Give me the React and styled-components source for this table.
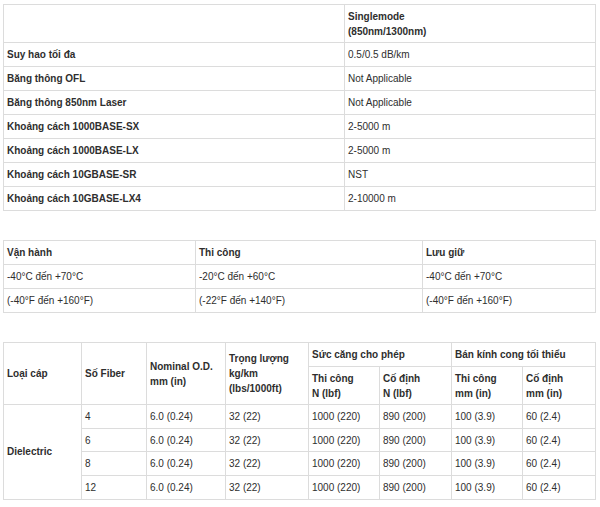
import React from "react";
import styled, { createGlobalStyle } from "styled-components";

const Global = createGlobalStyle`
  html, body { margin: 0; padding: 0; background: #fff; }
  body { font-family: "Liberation Sans", Arial, sans-serif; }
`;

const Page = styled.div`
  padding: 4px 0 0 3px;
  width: 592px;
  display: flex;
  flex-direction: column;
  gap: 29px;
`;

const Table = styled.table`
  border-collapse: collapse;
  table-layout: fixed;
  width: 592px;
  font-size: 10px;
  line-height: 15px;
  color: #2e2e2e;
  margin-top: ${(p) => p.$mt || 0}px;
`;

const Row = styled.tr`
  height: ${(p) => p.$h || 24}px;
`;

const Cell = styled.td`
  border: 1px solid #dcdcdc;
  padding: 0 3px;
  vertical-align: middle;
  font-weight: ${(p) => (p.$bold ? 700 : 400)};
  white-space: nowrap;
`;

const Col = ({ widths }) => (
  <colgroup>
    {widths.map((w, i) => (
      <col key={i} style={{ width: w }} />
    ))}
  </colgroup>
);

const spec = [
  ["Suy hao tối đa", "0.5/0.5 dB/km"],
  ["Băng thông OFL", "Not Applicable"],
  ["Băng thông 850nm Laser", "Not Applicable"],
  ["Khoảng cách 1000BASE-SX", "2-5000 m"],
  ["Khoảng cách 1000BASE-LX", "2-5000 m"],
  ["Khoảng cách 10GBASE-SR", "NST"],
  ["Khoảng cách 10GBASE-LX4", "2-10000 m"],
];

const fibers = ["4", "6", "8", "12"];

export default function App() {
  return (
    <>
      <Global />
      <Page>
        <Table>
          <Col widths={[341, 251]} />
          <tbody>
            <Row $h={38}>
              <Cell />
              <Cell $bold>
                Singlemode
                <br />
                (850nm/1300nm)
              </Cell>
            </Row>
            {spec.map(([k, v]) => (
              <Row key={k}>
                <Cell $bold>{k}</Cell>
                <Cell>{v}</Cell>
              </Row>
            ))}
          </tbody>
        </Table>

        <Table>
          <Col widths={[192, 227, 173]} />
          <tbody>
            <Row>
              <Cell $bold>Vận hành</Cell>
              <Cell $bold>Thi công</Cell>
              <Cell $bold>Lưu giữ</Cell>
            </Row>
            <Row>
              <Cell>-40°C đến +70°C</Cell>
              <Cell>-20°C đến +60°C</Cell>
              <Cell>-40°C đến +70°C</Cell>
            </Row>
            <Row>
              <Cell>(-40°F đến +160°F)</Cell>
              <Cell>(-22°F đến +140°F)</Cell>
              <Cell>(-40°F đến +160°F)</Cell>
            </Row>
          </tbody>
        </Table>

        <Table>
          <Col widths={[78, 65, 79, 83, 71, 72, 71, 73]} />
          <tbody>
            <Row $h={24}>
              <Cell $bold rowSpan={2}>Loại cáp</Cell>
              <Cell $bold rowSpan={2}>Số Fiber</Cell>
              <Cell $bold rowSpan={2}>
                Nominal O.D.
                <br />
                mm (in)
              </Cell>
              <Cell $bold rowSpan={2}>
                Trọng lượng
                <br />
                kg/km
                <br />
                (lbs/1000ft)
              </Cell>
              <Cell $bold colSpan={2}>Sức căng cho phép</Cell>
              <Cell $bold colSpan={2}>Bán kính cong tối thiểu</Cell>
            </Row>
            <Row $h={38}>
              <Cell $bold>
                Thi công
                <br />
                N (lbf)
              </Cell>
              <Cell $bold>
                Cố định
                <br />
                N (lbf)
              </Cell>
              <Cell $bold>
                Thi công
                <br />
                mm (in)
              </Cell>
              <Cell $bold>
                Cố định
                <br />
                mm (in)
              </Cell>
            </Row>
            {fibers.map((f, i) => (
              <Row key={f} $h={23.7}>
                {i === 0 && (
                  <Cell $bold rowSpan={4}>
                    Dielectric
                  </Cell>
                )}
                <Cell>{f}</Cell>
                <Cell>6.0 (0.24)</Cell>
                <Cell>32 (22)</Cell>
                <Cell>1000 (220)</Cell>
                <Cell>890 (200)</Cell>
                <Cell>100 (3.9)</Cell>
                <Cell>60 (2.4)</Cell>
              </Row>
            ))}
          </tbody>
        </Table>
      </Page>
    </>
  );
}
